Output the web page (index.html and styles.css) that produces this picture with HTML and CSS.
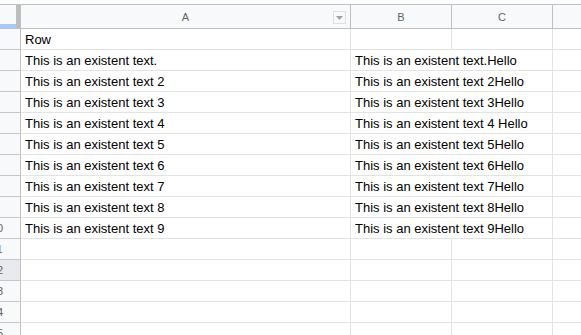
FILE: index.html
```html
<!DOCTYPE html>
<html lang="en">

<head>
	<meta charset="UTF-8">
	<meta name="viewport" content="width=device-width, initial-scale=1.0">
	<title>Sheet</title>
	<link rel="stylesheet" href="styles.css">
</head>

<body>
	<div class="topbar"></div>
	<div class="grid">
		<div class="row head">
			<div class="corner">
				<div class="corner-fill"><div class="corner-sel"></div></div>
				<div class="corner-grip"></div>
			</div>
			<div class="colhead colA">A
				<span class="filter">
					<svg width="7" height="4" viewBox="0 0 7 4"><polygon points="0,0 7,0 3.5,4" fill="#9aa0a6" /></svg>
				</span>
			</div>
			<div class="colhead">B</div>
			<div class="colhead">C</div>
			<div class="colhead last"></div>
		</div>

		<div class="row">
			<div class="rowhead"><span>1</span></div>
			<div class="cell">Row</div>
			<div class="cell"></div>
			<div class="cell"></div>
			<div class="cell last"></div>
		</div>
		<div class="row">
			<div class="rowhead"><span>2</span></div>
			<div class="cell">This is an existent text.</div>
			<div class="cell spill">This is an existent text.Hello</div>
			<div class="cell"></div>
			<div class="cell last"></div>
		</div>
		<div class="row">
			<div class="rowhead"><span>3</span></div>
			<div class="cell">This is an existent text 2</div>
			<div class="cell spill">This is an existent text 2Hello</div>
			<div class="cell"></div>
			<div class="cell last"></div>
		</div>
		<div class="row">
			<div class="rowhead"><span>4</span></div>
			<div class="cell">This is an existent text 3</div>
			<div class="cell spill">This is an existent text 3Hello</div>
			<div class="cell"></div>
			<div class="cell last"></div>
		</div>
		<div class="row">
			<div class="rowhead"><span>5</span></div>
			<div class="cell">This is an existent text 4</div>
			<div class="cell spill">This is an existent text 4 Hello</div>
			<div class="cell"></div>
			<div class="cell last"></div>
		</div>
		<div class="row">
			<div class="rowhead"><span>6</span></div>
			<div class="cell">This is an existent text 5</div>
			<div class="cell spill">This is an existent text 5Hello</div>
			<div class="cell"></div>
			<div class="cell last"></div>
		</div>
		<div class="row">
			<div class="rowhead"><span>7</span></div>
			<div class="cell">This is an existent text 6</div>
			<div class="cell spill">This is an existent text 6Hello</div>
			<div class="cell"></div>
			<div class="cell last"></div>
		</div>
		<div class="row">
			<div class="rowhead"><span>8</span></div>
			<div class="cell">This is an existent text 7</div>
			<div class="cell spill">This is an existent text 7Hello</div>
			<div class="cell"></div>
			<div class="cell last"></div>
		</div>
		<div class="row">
			<div class="rowhead"><span>9</span></div>
			<div class="cell">This is an existent text 8</div>
			<div class="cell spill">This is an existent text 8Hello</div>
			<div class="cell"></div>
			<div class="cell last"></div>
		</div>
		<div class="row">
			<div class="rowhead"><span>10</span></div>
			<div class="cell">This is an existent text 9</div>
			<div class="cell spill">This is an existent text 9Hello</div>
			<div class="cell"></div>
			<div class="cell last"></div>
		</div>
		<div class="row">
			<div class="rowhead"><span>11</span></div>
			<div class="cell"></div>
			<div class="cell"></div>
			<div class="cell"></div>
			<div class="cell last"></div>
		</div>
		<div class="row">
			<div class="rowhead hover"><span>12</span></div>
			<div class="cell"></div>
			<div class="cell"></div>
			<div class="cell"></div>
			<div class="cell last"></div>
		</div>
		<div class="row">
			<div class="rowhead"><span>13</span></div>
			<div class="cell"></div>
			<div class="cell"></div>
			<div class="cell"></div>
			<div class="cell last"></div>
		</div>
		<div class="row">
			<div class="rowhead"><span>14</span></div>
			<div class="cell"></div>
			<div class="cell"></div>
			<div class="cell"></div>
			<div class="cell last"></div>
		</div>
		<div class="row">
			<div class="rowhead"><span>15</span></div>
			<div class="cell"></div>
			<div class="cell"></div>
			<div class="cell"></div>
			<div class="cell last"></div>
		</div>
	</div>
</body>

</html>
```

FILE: styles.css
```css
* {
	box-sizing: border-box;
}

body {
	margin: 0;
	background: #fff;
	font-family: "Liberation Sans", Arial, sans-serif;
	overflow: hidden;
}

.topbar {
	height: 5px;
	border-bottom: 1px solid #c0c0c0;
}

.row {
	display: grid;
	grid-template-columns: 21px 330px 101px 101px 1fr;
	height: 21px;
}

.row.head {
	height: 24px;
}

/* header row */
.corner {
	display: flex;
	background: #f8f9fa;
	border-right: 1px solid #c0c0c0;
	border-bottom: 1px solid #c0c0c0;
}

.corner-fill {
	flex: 1;
	display: flex;
	align-items: flex-end;
}

.corner-sel {
	flex: 1;
	height: 4px;
	background: #a8c7fa;
}

.corner-grip {
	width: 4px;
	background: #bdbdbd;
}

.colhead {
	position: relative;
	display: flex;
	align-items: center;
	justify-content: center;
	background: #f8f9fa;
	border-right: 1px solid #c0c0c0;
	border-bottom: 1px solid #c0c0c0;
	color: #5f6368;
	font-size: 11px;
}

.filter {
	position: absolute;
	right: 4px;
	top: 6px;
	width: 13px;
	height: 13px;
	border: 1px solid #e0e0e0;
	display: flex;
	align-items: center;
	justify-content: center;
}

/* row numbers, mostly scrolled out of view */
.rowhead {
	display: flex;
	justify-content: flex-end;
	align-items: center;
	overflow: hidden;
	background: #f8f9fa;
	border-right: 1px solid #c0c0c0;
	border-bottom: 1px solid #c4c7c5;
	color: #5f6368;
	font-size: 11px;
}

.rowhead span {
	flex: 0 0 46px;
	text-align: center;
}

.rowhead.hover {
	background: #e8eaed;
}

/* cells */
.cell {
	display: flex;
	align-items: flex-end;
	padding: 0 3px 1px 4px;
	border-right: 1px solid #e2e3e3;
	border-bottom: 1px solid #e2e3e3;
	color: #000;
	font-size: 13px;
	line-height: 16px;
	white-space: nowrap;
	overflow: hidden;
}

.cell.spill {
	overflow: visible;
	border-right-color: transparent;
}

.last {
	border-right: none;
}
```
